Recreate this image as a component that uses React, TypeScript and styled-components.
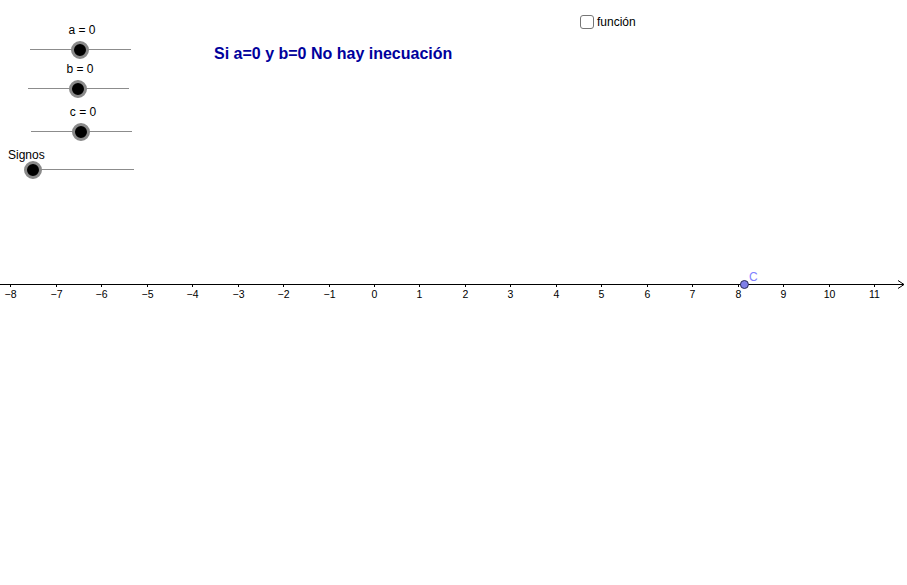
import React from 'react';
import styled, { createGlobalStyle } from 'styled-components';

const GlobalStyle = createGlobalStyle`
  html, body {
    margin: 0;
    padding: 0;
    background: #ffffff;
  }
  body {
    font-family: "Liberation Sans", Arial, sans-serif;
  }
`;

// GeoGebra graphics view: everything sits on a free canvas
const Canvas = styled.div`
  position: relative;
  width: 907px;
  height: 585px;
  overflow: hidden;
  background: #ffffff;
  color: #000000;
`;

const Drawing = styled.svg`
  position: absolute;
  top: 0;
  left: 0;
`;

const Track = styled.div<{ $x: number; $y: number }>`
  position: absolute;
  left: ${(p) => p.$x}px;
  top: ${(p) => p.$y}px;
  width: 101px;
  height: 1px;
  background: #8c8c8c;
`;

const Knob = styled.div<{ $at: number }>`
  position: absolute;
  left: ${(p) => p.$at - 9}px;
  top: -8.5px;
  width: 12px;
  height: 12px;
  border-radius: 50%;
  background: #000000;
  border: 3px solid #8a8a8a;
`;

const SliderLabel = styled.span<{ $left?: number; $center?: number; $top: number }>`
  position: absolute;
  top: ${(p) => p.$top}px;
  ${(p) =>
    p.$center !== undefined
      ? `left: ${p.$center}px; transform: translateX(-50%);`
      : `left: ${p.$left}px;`}
  font-size: 12px;
  line-height: 14px;
  white-space: nowrap;
`;

const Title = styled.div`
  position: absolute;
  left: 214px;
  top: 45px;
  font-size: 16px;
  line-height: 18px;
  font-weight: bold;
  color: #00009c;
  white-space: nowrap;
`;

const CheckRow = styled.label`
  position: absolute;
  left: 580px;
  top: 14px;
  display: flex;
  align-items: center;
  gap: 3px;
  font-size: 12px;
  line-height: 16px;
`;

const CheckBox = styled.span`
  box-sizing: border-box;
  width: 14px;
  height: 14px;
  border: 1.5px solid #767676;
  border-radius: 3px;
  background: #ffffff;
`;

interface SliderProps {
  x: number;
  y: number;
  knob: number;
  label: string;
  labelCenter?: number;
  labelLeft?: number;
  labelTop: number;
}

function Slider({ x, y, knob, label, labelCenter, labelLeft, labelTop }: SliderProps) {
  return (
    <>
      <SliderLabel $center={labelCenter} $left={labelLeft} $top={labelTop}>
        {label}
      </SliderLabel>
      <Track $x={x} $y={y}>
        <Knob $at={knob - x} />
      </Track>
    </>
  );
}

const UNIT = 45.45;
const ORIGIN = 374;
const AXIS_Y = 284;
const FONT = '"Liberation Sans", Arial, sans-serif';

function Axis() {
  const ticks = [];
  for (let n = -8; n <= 11; n++) ticks.push(n);
  const cx = ORIGIN + 8.15 * UNIT;
  return (
    <Drawing width={907} height={585}>
      <line x1={0} y1={AXIS_Y + 0.5} x2={904} y2={AXIS_Y + 0.5} stroke="#000" strokeWidth={1} />
      <polyline
        points={`898,${AXIS_Y - 3.5} 904,${AXIS_Y + 0.5} 898,${AXIS_Y + 4.5}`}
        fill="none"
        stroke="#000"
        strokeWidth={1}
      />
      {ticks.map((n) => {
        const x = Math.round(ORIGIN + n * UNIT) + 0.5;
        return (
          <g key={n}>
            <line x1={x} y1={AXIS_Y} x2={x} y2={AXIS_Y + 3} stroke="#000" strokeWidth={1} />
            <text x={x} y={AXIS_Y + 14} fontSize={10.5} textAnchor="middle" fontFamily={FONT} fill="#000">
              {n < 0 ? `\u2212${-n}` : n}
            </text>
          </g>
        );
      })}
      <circle cx={cx} cy={AXIS_Y + 0.5} r={4} fill="#8080e8" stroke="#2a2a55" strokeWidth={1} />
      <text x={749} y={281} fontSize={12} fontFamily={FONT} fill="#8080ff">
        C
      </text>
    </Drawing>
  );
}

export default function App() {
  return (
    <>
      <GlobalStyle />
      <Canvas>
        <Axis />
        <Slider x={30} y={49} knob={80} label="a = 0" labelCenter={82} labelTop={23} />
        <Slider x={28} y={88} knob={78} label="b = 0" labelCenter={80} labelTop={62} />
        <Slider x={31} y={131} knob={81} label="c = 0" labelCenter={83} labelTop={105} />
        <Slider x={33} y={169} knob={33} label="Signos" labelLeft={8} labelTop={148} />
        <Title>Si a=0 y b=0 No hay inecuación</Title>
        <CheckRow>
          <CheckBox />
          función
        </CheckRow>
      </Canvas>
    </>
  );
}
